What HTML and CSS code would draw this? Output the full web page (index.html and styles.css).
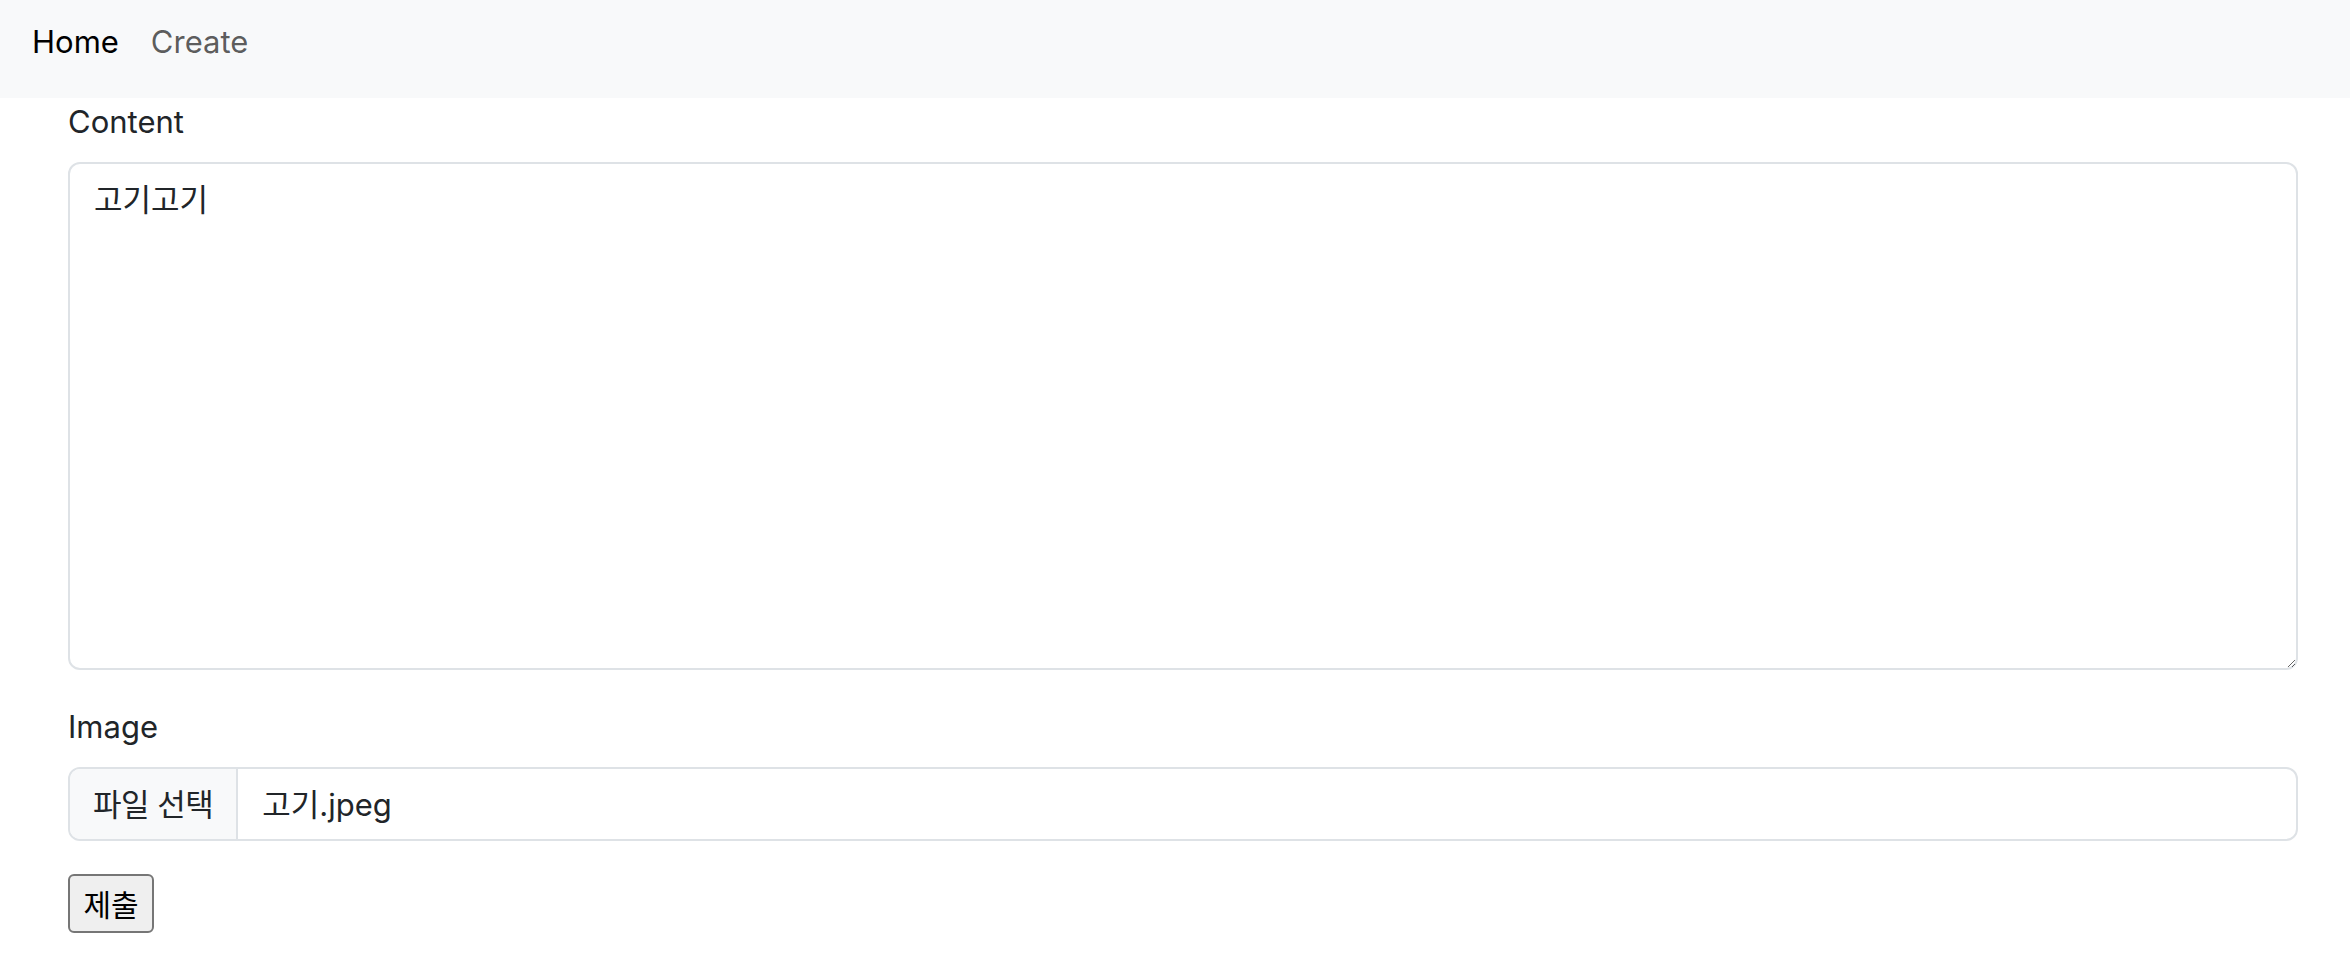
FILE: index.html
```html
<!DOCTYPE html>
<html lang="ko">
<head>
<meta charset="utf-8">
<title>Create</title>
<link rel="stylesheet" href="styles.css">
</head>
<body>
<nav class="navbar">
  <a class="nav-link active" href="#">Home</a>
  <a class="nav-link" href="#">Create</a>
</nav>
<main class="page">
  <form class="post-form">
    <div class="field">
      <label class="form-label" for="content">Content</label>
      <textarea id="content" class="form-control textarea">고기고기</textarea>
    </div>
    <div class="field">
      <label class="form-label">Image</label>
      <div class="file-input">
        <span class="file-button">파일 선택</span>
        <span class="file-name">고기.jpeg</span>
      </div>
    </div>
    <button type="button" class="submit">제출</button>
  </form>
</main>
</body>
</html>
```

FILE: styles.css
```css
* { box-sizing: border-box; }

html, body {
  margin: 0;
  background: #fff;
}

body {
  font-family: Inter, "Noto Sans CJK KR", "Noto Sans", sans-serif;
  font-size: 31px;
  line-height: 48px;
  color: #212529;
}

.navbar {
  display: flex;
  align-items: flex-start;
  height: 98px;
  padding: 18px 16px 0;
  background: #f8f9fa;
}

.nav-link {
  padding: 0 16px;
  text-decoration: none;
  color: rgba(0, 0, 0, 0.65);
}

.nav-link.active {
  color: #000;
}

.page {
  padding: 0 52px 0 68px;
}

.field {
  margin-bottom: 33px;
}

.form-label {
  display: block;
  margin-bottom: 16px;
}

.form-control {
  display: block;
  width: 100%;
  border: 2px solid #dee2e6;
  border-radius: 12px;
  font: inherit;
  color: #212529;
  background: #fff;
}

.textarea {
  height: 508px;
  padding: 12px 24px;
  resize: vertical;
  outline: none;
}

.file-input {
  display: flex;
  height: 74px;
  border: 2px solid #dee2e6;
  border-radius: 12px;
  overflow: hidden;
}

.file-button {
  padding: 12px 23px;
  background: #f8f9fa;
  border-right: 2px solid #dee2e6;
  color: #212529;
  letter-spacing: -0.5px;
}

.file-name {
  padding: 12px 24px;
  color: #212529;
}

.submit {
  display: block;
  width: 86px;
  padding: 2px 0;
  height: 59px;
  font-family: "Noto Sans CJK KR", sans-serif;
  font-size: 30px;
  line-height: 51px;
  text-align: center;
  color: #000;
  background: #efefef;
  border: 2px solid #767676;
  border-radius: 6px;
}
```
